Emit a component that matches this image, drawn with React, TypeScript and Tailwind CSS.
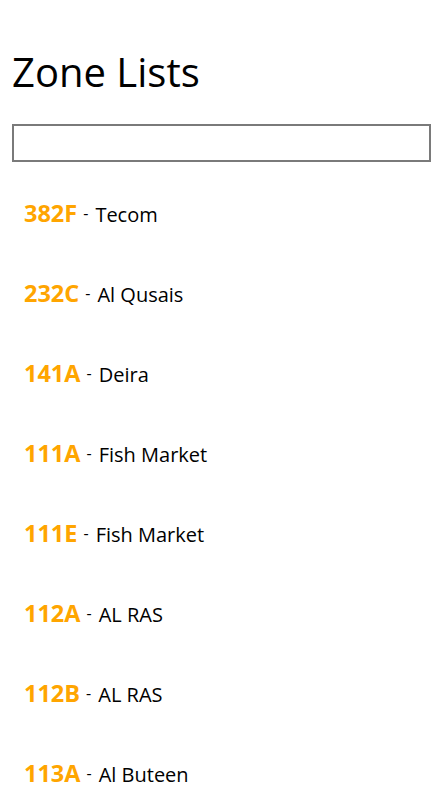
import React from "react";

const zones = [
  { code: "382F", name: "Tecom" },
  { code: "232C", name: "Al Qusais" },
  { code: "141A", name: "Deira" },
  { code: "111A", name: "Fish Market" },
  { code: "111E", name: "Fish Market" },
  { code: "112A", name: "AL RAS" },
  { code: "112B", name: "AL RAS" },
  { code: "113A", name: "Al Buteen" },
];

export default function App() {
  return (
    <div
      className="w-[443px] h-[787px] overflow-hidden bg-white text-black"
      style={{ fontFamily: '"Open Sans", "Noto Sans", sans-serif' }}
    >
      <h1 className="pt-[48px] pl-[12px] text-[40px] leading-[48px] font-normal">
        Zone Lists
      </h1>
      <div className="mx-3 mt-[28px] h-[38px] border-2 border-[#7a7a7a] bg-white" />
      <ul className="mt-[12px] pl-[24px]">
        {zones.map((z) => (
          <li key={z.code} className="flex h-[80px] items-center">
            <p className="whitespace-nowrap leading-[32px]">
              <span className="text-[23.5px] font-bold text-[#ffa500]">{z.code}</span>
              <span className="ml-[6px] inline-block text-[16px] align-[3px]">-</span>
              <span className="ml-[7px] text-[20px]">{z.name}</span>
            </p>
          </li>
        ))}
      </ul>
    </div>
  );
}
